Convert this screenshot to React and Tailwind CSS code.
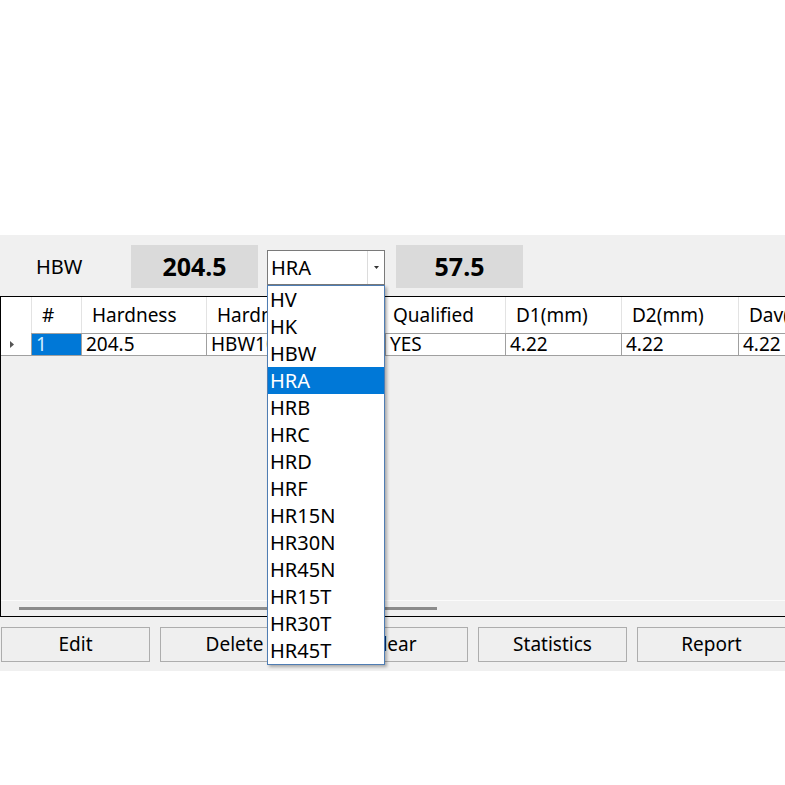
import React from 'react';

const columns = [
  { key: 'idx', label: '#', w: 'w-[50px]', pad: 'pl-[10px]' },
  { key: 'hardness', label: 'Hardness', w: 'w-[125px]', pad: 'pl-[10px]' },
  { key: 'hardnessType', label: 'Hardness Type', w: 'w-[179px]', pad: 'pl-[10px]' },
  { key: 'qualified', label: 'Qualified', w: 'w-[120px]', pad: 'pl-[7px]' },
  { key: 'd1', label: 'D1(mm)', w: 'w-[116px]', pad: 'pl-[10px]' },
  { key: 'd2', label: 'D2(mm)', w: 'w-[117px]', pad: 'pl-[10px]' },
  { key: 'dav', label: 'Dav(mm)', w: 'w-[120px]', pad: 'pl-[10px]' },
];

const row = { idx: '1', hardness: '204.5', hardnessType: 'HBW10/3000', qualified: 'YES', d1: '4.22', d2: '4.22', dav: '4.22' };

const scales = ['HV', 'HK', 'HBW', 'HRA', 'HRB', 'HRC', 'HRD', 'HRF', 'HR15N', 'HR30N', 'HR45N', 'HR15T', 'HR30T', 'HR45T'];

const buttons = ['Edit', 'Delete', 'Clear', 'Statistics', 'Report'];

export default function App() {
  return (
    <div className="w-[785px] h-[785px] bg-white overflow-hidden text-black" style={{ fontFamily: '"Noto Sans", "Open Sans", sans-serif' }}>
      <div className="h-[235px]" />

      {/* converter panel */}
      <div className="relative h-[436px] bg-[#f0f0f0]">
        <div className="flex items-start h-[61px] pt-[10px]">
          <div className="ml-[36px] w-[95px] h-[43px] flex items-center text-[20px]">HBW</div>
          <div className="w-[127px] h-[43px] bg-[#dadada] flex items-center justify-center text-[25px] font-bold">204.5</div>
          <div className="ml-[9px] mt-[5px] w-[118px] h-[35px] bg-white border border-[#7a7a7a] flex">
            <div className="flex-1 flex items-center pl-[3px] text-[20px]">HRA</div>
            <div className="w-[17px] border-l border-[#dcdcdc] flex items-center justify-center">
              <svg width="5" height="3" viewBox="0 0 5 3"><path d="M0 0h5L2.5 3z" fill="#333" /></svg>
            </div>
          </div>
          <div className="ml-[11px] w-[127px] h-[43px] bg-[#dadada] flex items-center justify-center text-[25px] font-bold">57.5</div>
        </div>

        {/* grid */}
        <div className="w-[900px] h-[321px] border border-black flex flex-col">
          <div className="flex h-[36px] bg-white">
            <div className="w-[31px] shrink-0 border-r border-[#e3e3e3]" />
            {columns.map((c) => (
              <div key={c.key} className={`${c.w} ${c.pad} shrink-0 border-r border-[#e3e3e3] flex items-center text-[19px] whitespace-nowrap overflow-hidden`}>
                {c.label}
              </div>
            ))}
          </div>
          <div className="flex h-[23px]">
            <div className="w-[31px] shrink-0 bg-white border-r border-b border-[#a0a0a0] flex items-center pl-[9px]">
              <svg width="4" height="7" viewBox="0 0 4 7"><path d="M0 0l4 3.5L0 7z" fill="#555" /></svg>
            </div>
            {columns.map((c) => {
              const sel = c.key === 'idx';
              return (
                <div key={c.key} className={`${c.w} shrink-0 border-r border-b border-t border-[#a0a0a0] flex items-center pl-[4px] text-[19px] whitespace-nowrap overflow-hidden ${sel ? 'bg-[#0078d7] text-[#cdeeff]' : 'bg-white'}`}>
                  {row[c.key]}
                </div>
              );
            })}
          </div>
          <div className="flex-1" />
          <div className="h-[16px] border-t border-[#fbfbfb] flex items-center">
            <div className="ml-[18px] w-[418px] h-[3px] bg-[#8c8c8c]" />
          </div>
        </div>

        {/* buttons */}
        <div className="flex gap-[10px] mt-[10px] ml-[1px]">
          {buttons.map((b) => (
            <div key={b} className="w-[149px] h-[35px] shrink-0 border border-[#adadad] bg-[#efefef] flex items-center justify-center text-[19px]">
              {b}
            </div>
          ))}
        </div>

        {/* open combo list */}
        <div className="absolute left-[267px] top-[50px] w-[118px] h-[380px] bg-white border border-[#4f7db3] shadow-[2px_2px_3px_rgba(0,0,0,0.3)]">
          {scales.map((s) => (
            <div key={s} className={`h-[27px] flex items-center pl-[2px] text-[20px] ${s === 'HRA' ? 'bg-[#0078d7] text-white' : ''}`}>
              {s}
            </div>
          ))}
        </div>
      </div>
    </div>
  );
}
